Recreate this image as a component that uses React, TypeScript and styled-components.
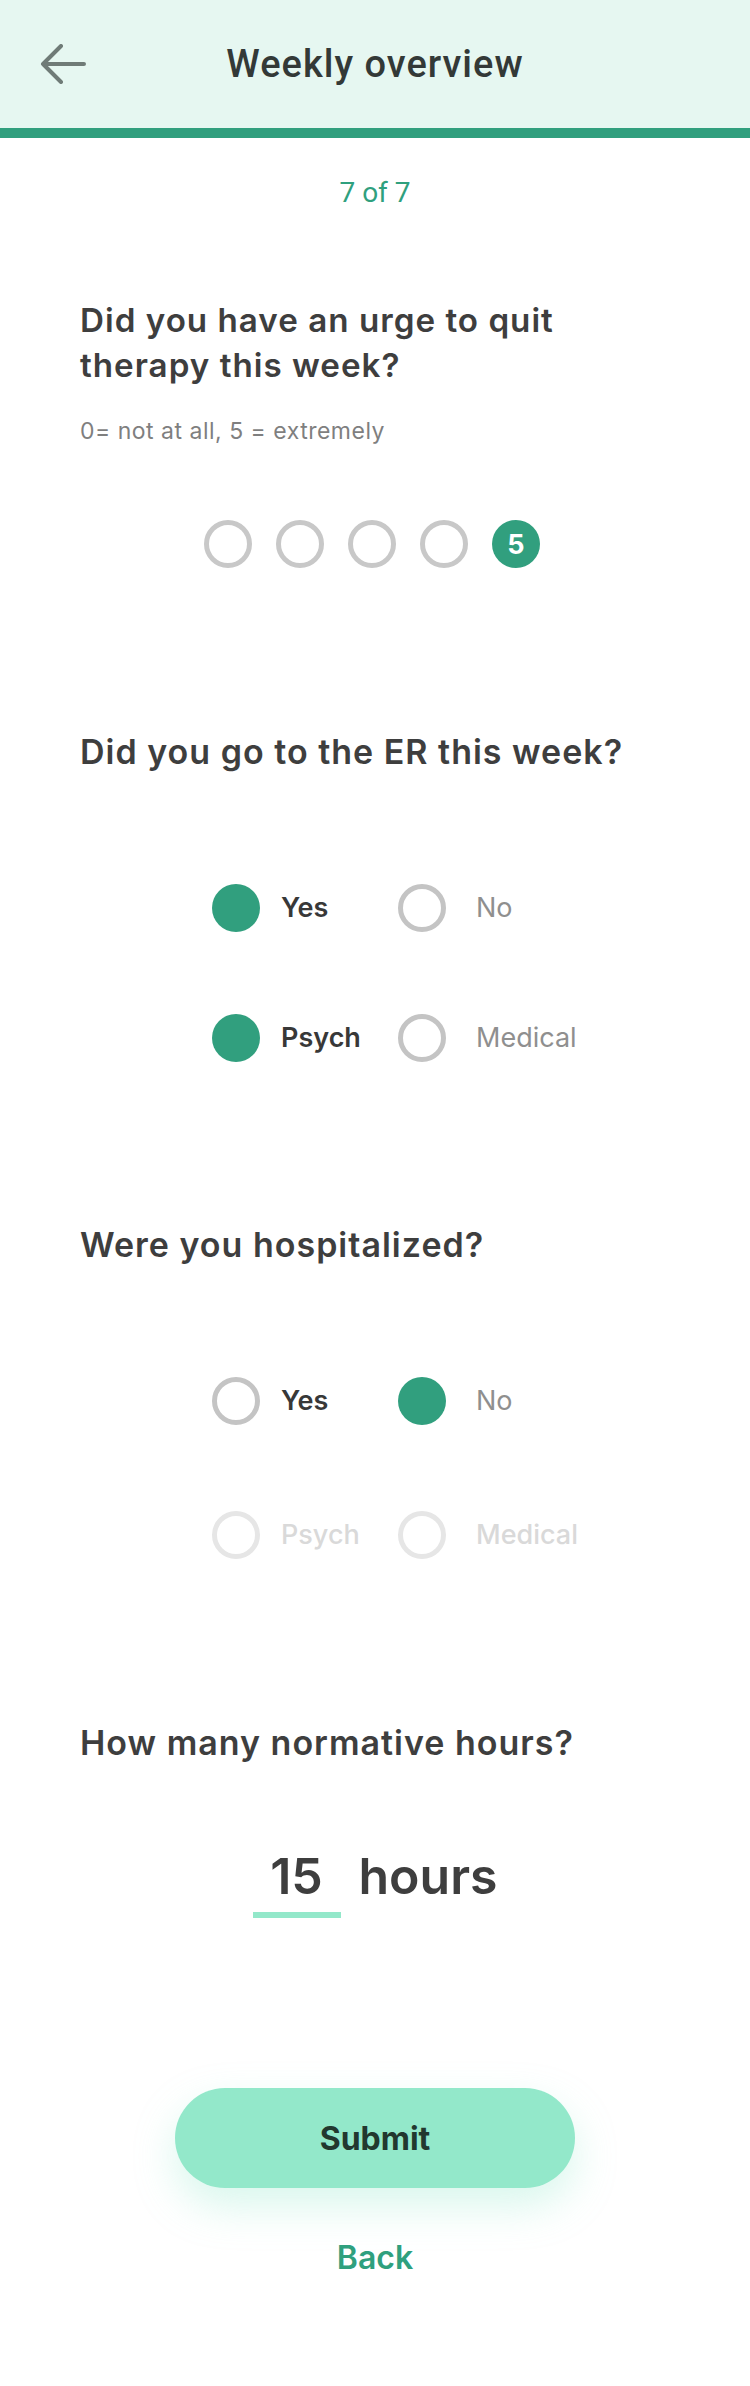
import React from "react";
import styled, { createGlobalStyle } from "styled-components";

const GlobalStyle = createGlobalStyle`
  html, body {
    margin: 0;
    padding: 0;
    background: #ffffff;
  }
  body {
    font-family: Inter, "Noto Sans", "Liberation Sans", sans-serif;
    -webkit-font-smoothing: antialiased;
  }
  * { box-sizing: border-box; }
`;

const Page = styled.div`
  width: 750px;
  min-height: 2386px;
  background: #ffffff;
  display: flex;
  flex-direction: column;
`;

const Header = styled.header`
  height: 138px;
  background: #e6f7f1;
  border-bottom: 10px solid #319f7e;
  display: grid;
  grid-template-columns: 1fr auto 1fr;
  align-items: center;
`;

const BackButton = styled.button`
  justify-self: start;
  margin-left: 40px;
  padding: 0;
  border: none;
  background: transparent;
  display: flex;
  cursor: pointer;
`;

const HeaderTitle = styled.h1`
  margin: 0;
  font-family: Roboto, "Liberation Sans", sans-serif;
  font-weight: 500;
  font-size: 38px;
  letter-spacing: 1px;
  color: #333937;
`;

const Step = styled.div`
  margin-top: 39px;
  text-align: center;
  font-family: Roboto, "Liberation Sans", sans-serif;
  font-size: 28px;
  line-height: 32px;
  color: #2fa07e;
`;

const Content = styled.main`
  padding: 0 80px;
  display: flex;
  flex-direction: column;
`;

const QuestionTitle = styled.h2<{ $top: number; $size?: number }>`
  margin: ${(p) => p.$top}px 0 0;
  max-width: 570px;
  font-size: ${(p) => p.$size ?? 34}px;
  line-height: 45px;
  letter-spacing: 1px;
  font-weight: 600;
  color: #3e3e3e;
`;

const Hint = styled.p`
  margin: 28px 0 0;
  font-size: 23px;
  line-height: 30px;
  letter-spacing: 0.5px;
  color: #7f7f7f;
`;

const Scale = styled.div`
  margin-top: 74px;
  padding-right: 6px;
  display: flex;
  justify-content: center;
  gap: 24px;
`;

const ScaleDot = styled.button<{ $selected?: boolean }>`
  width: 48px;
  height: 48px;
  padding: 0;
  border-radius: 50%;
  border: ${(p) => (p.$selected ? "none" : "5px solid #c8c8c8")};
  background: ${(p) => (p.$selected ? "#319f7e" : "#ffffff")};
  color: #ffffff;
  font-family: Inter, "Liberation Sans", sans-serif;
  font-weight: 700;
  font-size: 27px;
  line-height: 1;
  display: flex;
  align-items: center;
  justify-content: center;
`;

const OptionGrid = styled.div<{ $top: number; $rowGap: number }>`
  margin: ${(p) => p.$top}px 0 0 132px;
  display: grid;
  grid-template-columns: 186px auto;
  row-gap: ${(p) => p.$rowGap}px;
`;

const Option = styled.label<{ $gap: number }>`
  display: flex;
  align-items: center;
  gap: ${(p) => p.$gap}px;
  height: 48px;
`;

type RadioState = "checked" | "unchecked" | "disabled";

const RadioCircle = styled.span<{ $state: RadioState }>`
  flex: none;
  width: 48px;
  height: 48px;
  border-radius: 50%;
  background: ${(p) => (p.$state === "checked" ? "#319f7e" : "#ffffff")};
  border: ${(p) =>
    p.$state === "checked"
      ? "none"
      : p.$state === "disabled"
      ? "5px solid #e6e6e6"
      : "5px solid #c4c4c4"};
`;

type Tone = "strong" | "muted" | "faded";

const OptionLabel = styled.span<{ $tone: Tone }>`
  font-size: 27px;
  line-height: 32px;
  font-weight: ${(p) => (p.$tone === "strong" ? 600 : p.$tone === "faded" ? 500 : 400)};
  color: ${(p) =>
    p.$tone === "strong" ? "#383838" : p.$tone === "faded" ? "#d9d9d9" : "#8f8f8f"};
`;

const HoursRow = styled.div`
  margin-top: 81px;
  display: flex;
  justify-content: center;
  align-items: flex-start;
  gap: 18px;
`;

const HoursField = styled.span`
  width: 88px;
  padding-bottom: 6px;
  border-bottom: 6px solid #93e8ca;
  text-align: center;
  font-size: 50px;
  line-height: 60px;
  font-weight: 600;
  color: #3e3e3e;
`;

const HoursUnit = styled.span`
  font-size: 50px;
  line-height: 60px;
  font-weight: 600;
  color: #3e3e3e;
`;

const Actions = styled.div`
  display: flex;
  flex-direction: column;
  align-items: center;
`;

const SubmitButton = styled.button`
  margin-top: 170px;
  width: 400px;
  height: 100px;
  border: none;
  border-radius: 50px;
  background: #93e8ca;
  box-shadow: 0 18px 40px rgba(147, 232, 202, 0.35);
  font-family: Inter, "Liberation Sans", sans-serif;
  font-weight: 700;
  font-size: 32px;
  color: #22382f;
  cursor: pointer;
`;

const BackLink = styled.a`
  margin-top: 50px;
  font-size: 32px;
  line-height: 40px;
  font-weight: 600;
  color: #2fa07e;
  text-decoration: none;
`;

type Opt = { label: string; state: RadioState; tone: Tone };

const Options: React.FC<{ top: number; rowGap: number; items: Opt[] }> = ({
  top,
  rowGap,
  items,
}) => (
  <OptionGrid $top={top} $rowGap={rowGap}>
    {items.map((o, i) => (
      <Option key={o.label + o.state} $gap={i % 2 === 0 ? 21 : 30}>
        <RadioCircle $state={o.state} />
        <OptionLabel $tone={o.tone}>{o.label}</OptionLabel>
      </Option>
    ))}
  </OptionGrid>
);

export default function App() {
  return (
    <Page>
      <GlobalStyle />
      <Header>
        <BackButton aria-label="Back">
          <svg width="46" height="40" viewBox="0 0 46 40" fill="none">
            <path
              d="M44 20H3M21 2L3 20L21 38"
              stroke="#6f7b77"
              strokeWidth="4"
              strokeLinecap="round"
              strokeLinejoin="round"
            />
          </svg>
        </BackButton>
        <HeaderTitle>Weekly overview</HeaderTitle>
        <span />
      </Header>
      <Step>7 of 7</Step>
      <Content>
        <QuestionTitle $top={89} $size={33.2}>
          Did you have an urge to quit therapy this week?
        </QuestionTitle>
        <Hint>0= not at all, 5 = extremely</Hint>
        <Scale>
          {[1, 2, 3, 4].map((n) => (
            <ScaleDot key={n} aria-label={String(n)} />
          ))}
          <ScaleDot $selected>5</ScaleDot>
        </Scale>

        <QuestionTitle $top={161}>Did you go to the ER this week?</QuestionTitle>
        <Options
          top={110}
          rowGap={82}
          items={[
            { label: "Yes", state: "checked", tone: "strong" },
            { label: "No", state: "unchecked", tone: "muted" },
            { label: "Psych", state: "checked", tone: "strong" },
            { label: "Medical", state: "unchecked", tone: "muted" },
          ]}
        />

        <QuestionTitle $top={160}>Were you hospitalized?</QuestionTitle>
        <Options
          top={110}
          rowGap={86}
          items={[
            { label: "Yes", state: "unchecked", tone: "strong" },
            { label: "No", state: "checked", tone: "muted" },
            { label: "Psych", state: "disabled", tone: "faded" },
            { label: "Medical", state: "disabled", tone: "faded" },
          ]}
        />

        <QuestionTitle $top={161}>How many normative hours?</QuestionTitle>
        <HoursRow>
          <HoursField>15</HoursField>
          <HoursUnit>hours</HoursUnit>
        </HoursRow>

        <Actions>
          <SubmitButton>Submit</SubmitButton>
          <BackLink href="#">Back</BackLink>
        </Actions>
      </Content>
    </Page>
  );
}
